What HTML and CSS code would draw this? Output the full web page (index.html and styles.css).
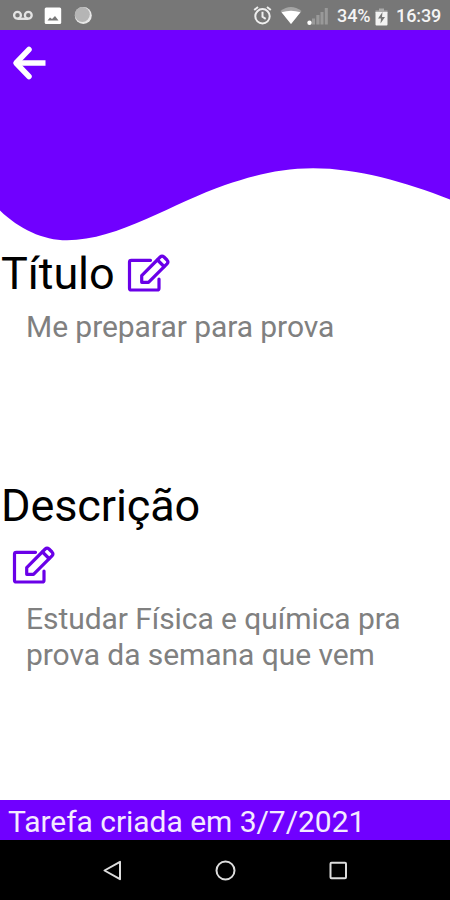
FILE: index.html
```html
<!DOCTYPE html>
<html lang="pt-BR">
<head>
<meta charset="utf-8">
<title>Tarefa</title>
<link rel="stylesheet" href="styles.css">
</head>
<body>
<svg class="defs" aria-hidden="true">
  <symbol id="edit" viewBox="0 0 44 40">
    <path d="M24.500 7.300H5.300Q3.500 7.300 3.500 9.100V35.200Q3.500 37 5.300 37H31.200Q33 37 33 35.200V26" />
    <path d="M15.700 29.300V22.700L34.200 4Q36 2.200 38 4L41 7Q42.800 8.900 41 10.800L22.500 29.300Z" />
    <path d="M31.500 7L38 13.500" />
  </symbol>
</svg>
<div class="screen">
  <div class="status">
    <svg class="status-left" viewBox="0 0 92 30">
      <g fill="none" stroke="#e4e4e4" stroke-width="2.300"><circle cx="17.500" cy="15.200" r="3.400"/><circle cx="28.300" cy="15.200" r="3.400"/><path d="M17.500 18.800H28.300"/></g>
      <rect x="44.700" y="7.500" width="16.500" height="16.500" rx="1.500" fill="#fff"/>
      <path d="M47.500 20.500L50 17.500L52 19L55 16L58.500 20.500Z" fill="#777"/>
      <circle cx="83.300" cy="15.500" r="8.500" fill="#e8e8e8"/><circle cx="82.300" cy="14.500" r="7.500" fill="#b5b5b5"/>
    </svg>
    <div class="status-right">
      <svg class="indicators" viewBox="0 0 76 30">
        <g fill="none" stroke="#eee" stroke-width="2"><circle cx="10.500" cy="16.300" r="7.200"/><path d="M10.500 11.800V16.800L13.700 18.800M2.200 10L6 7M18.800 10L15 7"/></g>
        <path d="M28.500 11Q38.800 3 49.500 11L39 24Z" fill="#a5a5a5"/><path d="M29.500 12.300Q39 9 48.500 12.300L39 24Z" fill="#fff"/>
        <g fill="#999"><rect x="60" y="18.500" width="3" height="6"/><rect x="64.300" y="15" width="3.200" height="9.500"/><rect x="68.500" y="12" width="3" height="12.500"/><rect x="72.800" y="8" width="3" height="16.500"/></g>
        <circle cx="57.500" cy="22.700" r="2.200" fill="#fff"/>
      </svg>
      <span class="percent">34%</span>
      <svg class="battery" viewBox="0 0 13 18"><path d="M4 0.500H9V2.500H12.500V5H0.500V2.500H4Z" fill="#aaa"/><path d="M0.500 4H12.500V16.500Q12.500 17.500 11.500 17.500H1.500Q0.500 17.500 0.500 16.500Z" fill="#f2f2f2"/><path d="M7.500 4L3 10.500H6L5.500 15.500L10 9H7Z" fill="#777"/></svg>
      <span class="clock">16:39</span>
    </div>
  </div>
  <header class="header">
    <svg class="wave" viewBox="0 0 450 212" preserveAspectRatio="none"><path d="M0 0H450V169.500C405 152 358 138.300 313 138.300C280 138.300 251 146 225 155C175 172 118 210.300 67 210.300C43 210.300 19 199 0 180.500Z" fill="#7000ff"/></svg>
    <svg class="back" viewBox="0 0 34 34"><path d="M17 3.500L4 17L17 30.500" /><path class="shaft" d="M5 17H33.500" /></svg>
  </header>
  <main class="content">
    <section class="title-block">
      <div class="heading-row"><h1>Título</h1><svg class="edit"><use href="#edit"/></svg></div>
      <p class="value task">Me preparar para prova</p>
    </section>
    <section class="description-block">
      <h1 class="description-title">Descrição</h1>
      <svg class="edit edit-description"><use href="#edit"/></svg>
      <p class="value details">Estudar Física e química pra<br>prova da semana que vem</p>
    </section>
  </main>
  <footer class="created"><span>Tarefa criada em 3/7/2021</span></footer>
  <nav class="navigation">
    <svg viewBox="0 0 24 24"><path d="M20 3.800V21.200L4.500 12.500Z"/></svg>
    <svg viewBox="0 0 24 24"><circle cx="12.500" cy="12.500" r="9"/></svg>
    <svg viewBox="0 0 24 24"><rect x="4.500" y="4.800" width="15.500" height="15.500" rx="1"/></svg>
  </nav>
</div>
</body>
</html>
```
FILE: styles.css
```css
* { box-sizing: border-box; }
body { margin: 0; font-family: Roboto, "Liberation Sans", sans-serif; background: #fff; }
svg { display: block; flex: none; }
h1, p { margin: 0; font-weight: 400; }
.defs { width: 0; height: 0; position: absolute; }
.screen { width: 450px; height: 900px; display: flex; flex-direction: column; overflow: hidden; }
.status { height: 30px; flex: none; display: flex; justify-content: space-between; background: #777; }
.status-left { width: 92px; height: 30px; }
.status-right { display: flex; align-items: center; padding-right: 9px; color: #f4f4f4; font-size: 18px; font-weight: 500; line-height: 30px; letter-spacing: -0.1px; white-space: nowrap; }
.indicators { width: 76px; height: 30px; margin-right: 9px; }
.percent { width: 33px; padding-top: 2px; }
.battery { width: 13px; height: 18px; margin: 3px 8px 0 5px; }
.clock { width: 45px; padding-top: 2px; }
.header { position: relative; height: 212px; flex: none; }
.wave { width: 450px; height: 212px; }
.back { position: absolute; left: 12px; top: 16px; width: 34px; height: 34px; overflow: visible; fill: none; stroke: #fff; stroke-width: 5.5; stroke-linecap: round; stroke-linejoin: round; }
.back .shaft { stroke-linecap: butt; }
.content { flex: 1; }
.title-block { height: 232px; padding-top: 4px; }
.heading-row { display: flex; height: 54px; }
h1 { font-size: 45px; line-height: 54px; padding-left: 1px; letter-spacing: -0.1px; white-space: nowrap; color: #000; }
.heading-row h1 { width: 126px; padding-top: 1px; }
.edit { width: 44px; height: 40px; margin-top: 7px; fill: none; stroke: #6a00e8; stroke-width: 3.2; stroke-linecap: round; stroke-linejoin: round; }
.value { padding-left: 26px; font-size: 30px; line-height: 35.500px; letter-spacing: -0.06px; color: #808080; white-space: nowrap; }
.task { padding-top: 9px; }
.description-title { padding-top: 5px; }
.edit-description { margin: 12px 0 0 11px; }
.details { padding-top: 16px; }
.created { height: 40px; flex: none; background: #7000ff; color: #f4eaff; font-size: 30px; line-height: 43px; letter-spacing: -0.04px; padding-left: 8px; white-space: nowrap; }
.navigation { height: 60px; flex: none; display: flex; justify-content: center; align-items: center; gap: 89px; background: #000; }
.navigation svg { width: 24px; height: 24px; fill: none; stroke: #ddd; stroke-width: 2; stroke-linejoin: round; }
```
